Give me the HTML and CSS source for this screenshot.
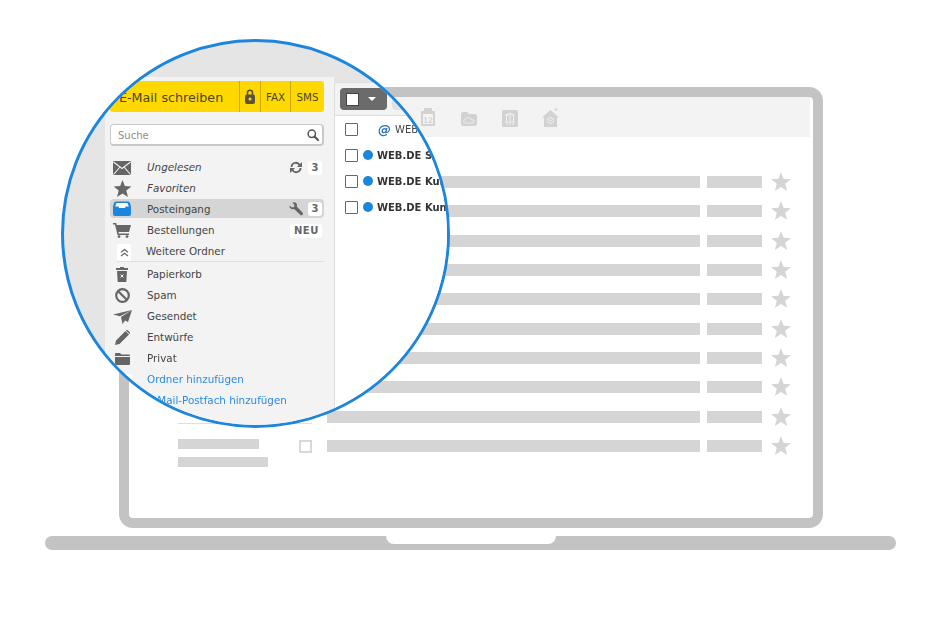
FILE: index.html
```html
<!DOCTYPE html>
<html lang="de">
<head>
<meta charset="utf-8">
<title>WEB.DE Postfach</title>
<link rel="stylesheet" href="styles.css">
</head>
<body>
<svg class="defs" width="0" height="0" aria-hidden="true">
  <symbol id="star" viewBox="0 0 20 20"><path d="M10 0l2.600 6.800 7.300.4-5.700 4.600 1.900 7.100L10 14.900l-6.100 4 1.900-7.100L.1 7.200l7.300-.4z"/></symbol>
</svg>
<div class="stage">
  <div class="screen">
    <div class="tools">
      <svg class="tool" width="14" height="18" viewBox="0 0 14 18"><path d="M0 3h3V0h8v3h3v15H0z"/><rect x="2" y="6" width="10" height="10" fill="#f3f3f3"/><text x="7" y="14.500" class="cal">12</text></svg>
      <svg class="tool t-folder" width="16" height="14" viewBox="0 0 16 14"><path d="M0 2q0-2 2-2h4l2 2h6q2 0 2 2v8q0 2-2 2H2q-2 0-2-2z"/><path d="M4.500 11q-2 0-2-1.700 0-1.500 1.700-1.600.6-2.200 3-2.200 2.300 0 2.900 2 2.800-.2 3 1.800 0 1.700-2 1.700z" fill="none" stroke="#f3f3f3" stroke-width=".8"/></svg>
      <svg class="tool t-arch" width="16" height="17" viewBox="0 0 16 17"><rect width="16" height="17" rx="1.500"/><path d="M3 5h10M4 5l4-2 4 2M4.500 6v5M8 6v5M11.500 6v5M3 12h10M4 14h2M7 14h2M10 14h2" fill="none" stroke="#f3f3f3"/></svg>
      <svg class="tool t-home" width="17" height="19" viewBox="0 0 17 19"><path d="M8.500 2L17 9.500h-2V19H2V9.500H0z"/><circle cx="14" cy="1.500" r="1.300"/><circle cx="8.500" cy="12.500" r="3" fill="none" stroke="#f3f3f3"/><circle cx="8.500" cy="12.500" r="1" fill="#f3f3f3"/></svg>
    </div>
    <div class="content">
      <div class="folders">
        <div class="rule"></div>
        <div class="ph ph-a"></div>
        <div class="ph ph-b"></div>
      </div>
      <div class="list">
        <div class="line"><i class="box"></i><i class="bar bar-l"></i><i class="bar bar-s"></i><svg class="fav"><use href="#star"/></svg></div>
        <div class="line"><i class="box"></i><i class="bar bar-l"></i><i class="bar bar-s"></i><svg class="fav"><use href="#star"/></svg></div>
        <div class="line"><i class="box"></i><i class="bar bar-l"></i><i class="bar bar-s"></i><svg class="fav"><use href="#star"/></svg></div>
        <div class="line"><i class="box"></i><i class="bar bar-l"></i><i class="bar bar-s"></i><svg class="fav"><use href="#star"/></svg></div>
        <div class="line"><i class="box"></i><i class="bar bar-l"></i><i class="bar bar-s"></i><svg class="fav"><use href="#star"/></svg></div>
        <div class="line"><i class="box"></i><i class="bar bar-l"></i><i class="bar bar-s"></i><svg class="fav"><use href="#star"/></svg></div>
        <div class="line"><i class="box"></i><i class="bar bar-l"></i><i class="bar bar-s"></i><svg class="fav"><use href="#star"/></svg></div>
        <div class="line"><i class="box"></i><i class="bar bar-l"></i><i class="bar bar-s"></i><svg class="fav"><use href="#star"/></svg></div>
        <div class="line"><i class="box box-off"></i><i class="bar bar-l"></i><i class="bar bar-s"></i><svg class="fav"><use href="#star"/></svg></div>
        <div class="line"><i class="box"></i><i class="bar bar-l"></i><i class="bar bar-s"></i><svg class="fav"><use href="#star"/></svg></div>
      </div>
    </div>
  </div>
  <div class="base"><div class="notch"></div></div>

  <div class="lens">
    <div class="lens-view">
      <aside class="side">
        <div class="compose">
          <div class="c-main">E-Mail schreiben</div>
          <div class="c-cell c-lock"><svg width="10" height="15" viewBox="0 0 10 15"><path d="M2.500 6V3.800a2.500 2.500 0 0 1 5 0V6" fill="none" stroke="#5b5340" stroke-width="1.600"/><rect y="5.500" width="10" height="9.500" rx="2" fill="#5b5340"/><circle cx="5" cy="10" r="1.500" fill="#ffd800"/></svg></div>
          <div class="c-cell c-fax">FAX</div>
          <div class="c-cell c-sms">SMS</div>
        </div>
        <div class="search">
          <span>Suche</span>
          <svg width="12" height="12" viewBox="0 0 12 12"><circle cx="4.800" cy="4.800" r="3.700" fill="none" stroke="#555" stroke-width="1.500"/><path d="M7.500 7.500L11 11" stroke="#555" stroke-width="2" stroke-linecap="round"/></svg>
        </div>
        <nav class="menu">
          <div class="row em">
            <span class="ico"><svg width="18" height="14" viewBox="0 0 18 14"><rect width="18" height="14" rx="1" fill="#666"/><path d="M.5 1l8.500 6.500L17.500 1M.5 13.500L7 6M17.500 13.500L11 6" fill="none" stroke="#f3f3f3" stroke-width="1.100"/></svg></span>
            <span class="label">Ungelesen</span>
            <svg class="meta-ico" width="14" height="13" viewBox="0 0 14 13"><path d="M1.500 6a5.300 5.300 0 0 1 9.500-3L13 1v5H8l1.700-1.700A3.500 3.500 0 0 0 3.300 6zM12.500 7a5.300 5.300 0 0 1-9.500 3l-2 2V7h5L4.300 8.700A3.500 3.500 0 0 0 10.700 7z" fill="#666"/></svg>
            <b class="chip">3</b>
          </div>
          <div class="row em">
            <span class="ico"><svg width="19" height="18" viewBox="0 0 20 20" fill="#666"><use href="#star"/></svg></span>
            <span class="label">Favoriten</span>
          </div>
          <div class="row active">
            <span class="ico"><svg width="18" height="15" viewBox="0 0 18 15"><path d="M3 .5h12q1.500 0 2 1.500l1 3.500V13q0 2-2 2H2q-2 0-2-2V5.500L1 2Q1.500.5 3 .5z" fill="#1c86dc"/><path d="M3.500 2h11l1.300 3.500H12.500L12 7H6l-.5-1.500H2.200z" fill="#fff"/></svg></span>
            <span class="label">Posteingang</span>
            <svg class="meta-ico" width="14" height="14" viewBox="0 0 14 14"><path d="M.7 3.500L3 5.500l2-.5.500-2L3.300.8Q6-.5 7.500 1.500q1 1.500.2 3L13.500 10.500q1 1.200 0 2.300t-2.300 0L5 7Q3 7.800 1.500 6.500.2 5.300.7 3.500z" fill="#666"/></svg>
            <b class="chip">3</b>
          </div>
          <div class="row">
            <span class="ico"><svg width="18" height="15" viewBox="0 0 18 15"><path d="M0 0h3.200l.6 2H18l-2 7H5.500l.4 1.500H16V12H4.500L2 1.500H0z" fill="#666"/><circle cx="6" cy="13.600" r="1.400" fill="#666"/><circle cx="14" cy="13.600" r="1.400" fill="#666"/></svg></span>
            <span class="label">Bestellungen</span>
            <b class="chip chip-new">NEU</b>
          </div>
          <div class="row more">
            <span class="chev"><svg width="9" height="9" viewBox="0 0 9 9"><path d="M1 4.200L4.500 1.500 8 4.200M1 8L4.500 5.300 8 8" fill="none" stroke="#666" stroke-width="1.200"/></svg></span>
            <span class="label">Weitere Ordner</span>
          </div>
          <div class="row first">
            <span class="ico"><svg width="12" height="15" viewBox="0 0 12 15"><path d="M0 1h4V0h4v1h4v2H0zM1 4h10l-.7 11H1.700z" fill="#666"/><path d="M4.500 7.500l3 3M7.500 7.500l-3 3" stroke="#f3f3f3"/></svg></span>
            <span class="label">Papierkorb</span>
          </div>
          <div class="row">
            <span class="ico"><svg width="15" height="15" viewBox="0 0 15 15"><circle cx="7.500" cy="7.500" r="6.300" fill="none" stroke="#666" stroke-width="2.200"/><path d="M3.200 3.200l8.600 8.600" stroke="#666" stroke-width="2.200"/></svg></span>
            <span class="label">Spam</span>
          </div>
          <div class="row">
            <span class="ico"><svg width="19" height="14" viewBox="0 0 19 14"><path d="M0 4.500L19 0 7 6.200zM19 0L8 7l1.500 7 2.500-3.500 3 1.500z" fill="#666"/></svg></span>
            <span class="label">Gesendet</span>
          </div>
          <div class="row">
            <span class="ico"><svg width="15" height="15" viewBox="0 0 15 15"><path d="M0 15l1-4.500L10.500 1 14 4.500 4.500 14zM11.500 0q.7-.3 1.300.2l2 2q.5.600.2 1.300l-.4.500L11 .500z" fill="#666"/></svg></span>
            <span class="label">Entwürfe</span>
          </div>
          <div class="row">
            <span class="ico"><svg width="15" height="12" viewBox="0 0 15 12"><path d="M0 1q0-1 1-1h4l1.500 1.500H14q1 0 1 1V3H0z" fill="#666"/><path d="M0 4h15v7q0 1-1 1H1q-1 0-1-1z" fill="#666"/></svg></span>
            <span class="label">Privat</span>
          </div>
          <div class="row link">
            <span class="ico"><i class="plus"></i></span>
            <span class="label">Ordner hinzufügen</span>
          </div>
          <div class="row link">
            <span class="ico"></span>
            <span class="label">E-Mail-Postfach hinzufügen</span>
          </div>
        </nav>
      </aside>
      <section class="pane">
        <div class="pane-bar">
          <div class="select"><i class="select-box"></i><i class="caret"></i></div>
          <div class="next"></div>
        </div>
        <div class="mail"><i class="mbox"></i><span class="at">@</span><span class="from plain">WEB.DE</span></div>
        <div class="mail"><i class="mbox"></i><i class="dot"></i><span class="from">WEB.DE Service</span></div>
        <div class="mail"><i class="mbox"></i><i class="dot"></i><span class="from">WEB.DE Kundencenter</span></div>
        <div class="mail"><i class="mbox"></i><i class="dot"></i><span class="from">WEB.DE Kundencenter</span></div>
      </section>
    </div>
  </div>
</div>
</body>
</html>
```

FILE: styles.css
```css
* { box-sizing: border-box; }
html, body { margin: 0; padding: 0; background: #fff; }
body { width: 940px; height: 620px; overflow: hidden; font-family: "DejaVu Sans", Verdana, sans-serif; }
.defs { position: absolute; }

.stage { position: relative; width: 940px; height: 620px; padding-top: 87px; }

/* laptop */
.screen {
  width: 704px; height: 441px; margin-left: 119px;
  border: 10px solid #c3c3c3; border-radius: 14px;
  background: #fff; overflow: hidden;
}
.tools {
  display: flex; align-items: center; gap: 25px;
  height: 40px; margin-right: 3px; padding-left: 292px;
  background: #f3f3f3;
}
.tool { fill: #d2d2d2; flex: none; }
.t-folder { margin: 4px 0 0 1px; }
.t-arch { margin-top: 2px; }
.t-home { margin: 1px 0 0 -1px; }
.cal { font: 7.500px "DejaVu Sans", sans-serif; text-anchor: middle; fill: #c4c4c4; }
.content { display: flex; }
.folders { flex: none; width: 170px; padding: 286px 0 0 49px; }
.rule { width: 134px; height: 1px; background: #dedede; margin-bottom: 15px; }
.ph { height: 10px; background: #d5d5d5; margin-bottom: 8px; }
.ph-a { width: 81px; }
.ph-b { width: 90px; }
.list { display: flex; flex-direction: column; gap: 9.330px; padding-top: 35px; }
.line { display: flex; align-items: center; height: 20px; }
.box { width: 13px; height: 13px; border: 2px solid #d8d8d8; margin: 1px 15px 0 0; flex: none; }
.box-off { visibility: hidden; }
.bar { display: block; height: 12px; background: #d5d5d5; flex: none; }
.bar-l { width: 373px; margin-right: 7px; }
.bar-s { width: 55px; margin-right: 9px; }
.fav { width: 20px; height: 20px; fill: #d5d5d5; flex: none; }

.base {
  display: flex; justify-content: center;
  width: 851px; height: 14px; margin: 8px 0 0 45px;
  background: #c3c3c3; border-radius: 7px;
}
.notch { width: 170px; height: 8px; background: #fff; border-radius: 0 0 8px 8px; }

/* magnifier */
.lens {
  position: absolute; left: 61px; top: 39px;
  width: 389px; height: 389px;
  border: 3px solid #1c86dc; border-radius: 50%;
  overflow: hidden; background: #e5e5e5;
}
.lens-view {
  display: flex; height: 100%;
  padding: 35px 0 0 41px;
  filter: blur(.3px);
}
.side { flex: none; width: 229px; padding: 4px 10px 0 5px; background: #f3f3f3; }
.compose {
  display: flex; height: 31px;
  background: #ffd800; border-radius: 3px; color: #4a4426;
}
.c-main { flex: 1; padding-left: 9px; font-size: 12.700px; line-height: 33px; white-space: nowrap; }
.c-cell {
  display: flex; align-items: center; justify-content: center;
  border-left: 1px solid #cbab00; font-size: 10.300px;
}
.c-lock { width: 21px; }
.c-fax { width: 30px; }
.c-sms { width: 34px; }
.search {
  display: flex; align-items: center; justify-content: space-between;
  height: 22px; margin: 12px 0 11px; padding: 1px 3px 0 7px;
  background: #fff; border: 1px solid #c8c8c8; border-bottom-width: 2px; border-right-width: 2px; border-radius: 4px;
  font-size: 10px; color: #8d8d8d;
}
.row {
  display: flex; align-items: center;
  height: 21px; padding-right: 2px;
  font-size: 10.350px; color: #444; white-space: nowrap;
}
.em .label { font-style: italic; }
.ico { display: flex; align-items: center; justify-content: center; width: 24px; margin-right: 13px; flex: none; }
.label { flex: 1; margin-top: -1px; }
.active .label, .more .label { margin-top: 0; }
.meta-ico { margin-right: 5px; flex: none; }
.chip {
  display: block; min-width: 14px; height: 14px; padding: 0 3px;
  background: #fff; border-radius: 3px; text-align: center;
  font-size: 10px; line-height: 14px; color: #666;
}
.chip-new { letter-spacing: .6px; padding: 0 3px 0 4px; }
.active { height: 19px; margin-bottom: 2px; background: #d5d5d5; border-radius: 4px; }
.more {
  height: 20px; margin-left: 7px; padding-right: 1px;
  border-bottom: 1px solid #dfdfdf; box-sizing: content-box; padding-bottom: 0;
}
.chev {
  display: flex; align-items: center; justify-content: center;
  width: 14px; height: 17px; margin: 2px 15px 0 0; background: #fff; border-radius: 2px;
}
.first { margin-top: 2px; }
.link { color: #2b8ae0; }
.plus { display: block; width: 11px; height: 12px; margin-left: 8px; background: #fff; border-radius: 2px; }

.pane {
  flex: 1; min-width: 0; margin-top: 5px; overflow: hidden;
  background: #fff; border-left: 1px solid #dedede; border-top: 1px solid #dedede;
  border-top-left-radius: 5px;
}
.pane-bar {
  display: flex; gap: 5px; height: 33px; padding: 5px 0 0 5px;
  background: #f3f3f3; border-bottom: 1px solid #dedede;
}
.select {
  display: flex; align-items: center; width: 47px; height: 22px; padding-left: 6px;
  background: #6b6b6b; border-radius: 4px;
}
.select-box { width: 13px; height: 13px; background: #fff; border: 1px solid #444; }
.caret {
  width: 0; height: 0; margin-left: 9px;
  border-left: 4.500px solid transparent; border-right: 4.500px solid transparent; border-top: 4px solid #fff;
}
.next { width: 40px; height: 22px; background: #e1e1e1; border-radius: 4px; }
.mail { display: flex; align-items: center; height: 26px; padding-left: 10px; white-space: nowrap; }
.mbox { width: 13px; height: 13px; border: 1.500px solid #666; border-radius: 1px; background: #fff; flex: none; margin-right: 5px; }
.dot { width: 10px; height: 10px; border-radius: 50%; background: #1c86dc; flex: none; margin-right: 4px; }
.at { width: 14px; margin: 0 3px 0 15px; font-size: 13px; font-weight: bold; font-style: italic; color: #2f72b8; flex: none; }
.from { font-size: 10px; font-weight: bold; color: #333; }
.from.plain { font-weight: normal; color: #444; }
```
